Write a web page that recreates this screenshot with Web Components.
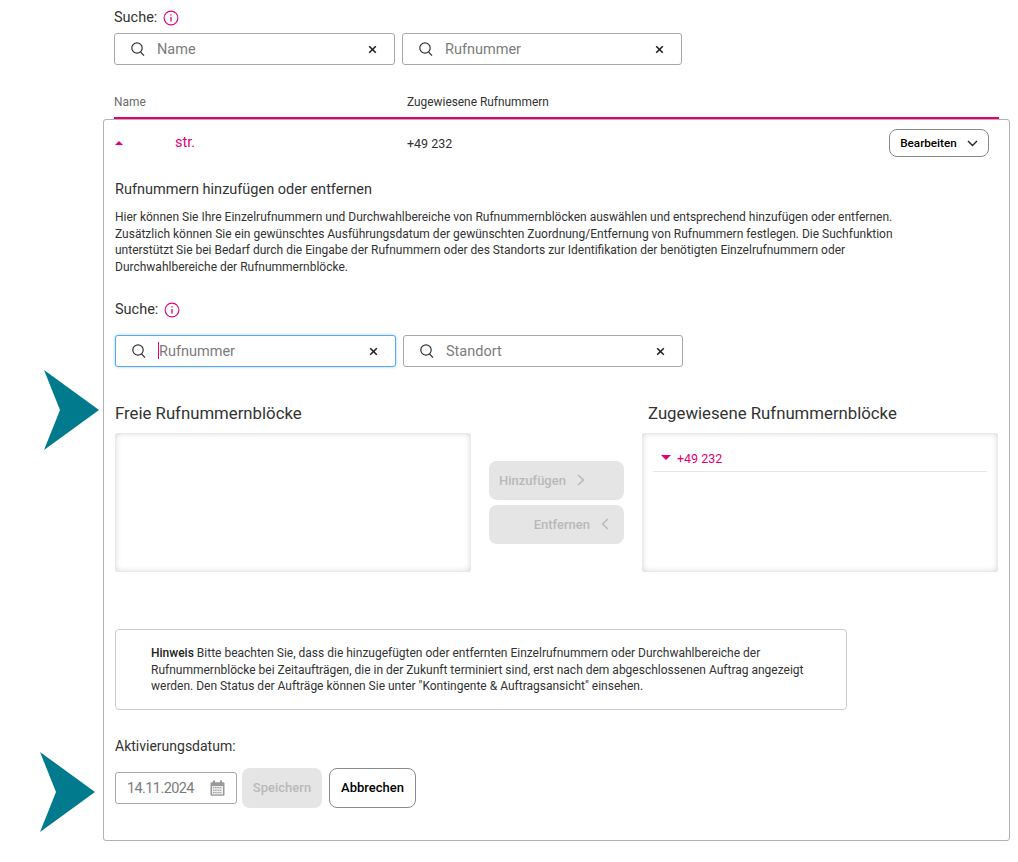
<!DOCTYPE html>
<html lang="de">
<head>
<meta charset="utf-8">
<title>Rufnummern</title>
<style>
  html, body { margin: 0; background: #fff; }
  body { font-family: Roboto, "Liberation Sans", sans-serif; color: #262626; position: relative; height: 862px; overflow: hidden; }
</style>
</head>
<body>
<number-page></number-page>
<script>
const SEARCH_ICON = `<svg width="16" height="16" viewBox="0 0 16 16" fill="none" stroke="#333" stroke-width="1.2"><circle cx="7" cy="7" r="5.2"/><path d="M10.6 11l3.4 3.6"/></svg>`;

class InfoLabel extends HTMLElement {
  connectedCallback() {
    this.attachShadow({ mode: "open" }).innerHTML = `
      <style>
        :host { display: flex; align-items: center; gap: 6px; font-size: 14.5px; line-height: 18px; color: #333; }
        svg { display: block; }
      </style>
      <slot></slot>
      <svg width="16" height="16" viewBox="0 0 16 16" fill="none" stroke="#e20074" stroke-width="1.1">
        <circle cx="8" cy="8" r="6.9"/>
        <path d="M8 7v4.4" stroke-width="1.3"/><path d="M8 4.2v1.4" stroke-width="1.3"/>
      </svg>`;
  }
}

class SearchField extends HTMLElement {
  connectedCallback() {
    const focused = this.hasAttribute("focused");
    this.attachShadow({ mode: "open" }).innerHTML = `
      <style>
        :host { display: flex; align-items: center; box-sizing: border-box; height: 32px; padding: 0 17px 0 15px; width: 100%;
          border: 1px solid ${focused ? "#5aa9ee" : "#a8a8a8"}; border-radius: 3px; background: #fff;
          ${focused ? "box-shadow: 0 0 3px rgba(70,160,240,.55);" : ""} }
        svg { display: block; flex: none; }
        .text { flex: 1; margin-left: 11px; font-size: 14.5px; color: #7c7c7c; white-space: nowrap; }
        .caret { display: inline-block; width: 1px; height: 17px; background: #e20074; vertical-align: -3px; margin-right: 0; }
      </style>
      ${SEARCH_ICON}
      <span class="text">${focused ? '<span class="caret"></span>' : ""}<slot></slot></span>
      <svg width="9" height="9" viewBox="0 0 9 9" stroke="#222" stroke-width="1.6"><path d="M1.2 1.2l6.6 6.6M7.8 1.2L1.2 7.8"/></svg>`;
  }
}

class ActionButton extends HTMLElement {
  connectedCallback() {
    this.attachShadow({ mode: "open" }).innerHTML = `
      <style>
        :host { display: inline-flex; align-items: center; justify-content: center; box-sizing: border-box; gap: 11px;
          height: 40px; padding-bottom: 1px; border-radius: 8px; font-size: 13px; font-weight: 500; white-space: nowrap; }
        :host([disabled]) { background: #e5e5e5; color: #b9b9b9; }
        :host([outline]) { background: #fff; color: #000; border: 1px solid #8a8a8a; }
      </style>
      <slot></slot>`;
  }
}

class ListBox extends HTMLElement {
  connectedCallback() {
    this.attachShadow({ mode: "open" }).innerHTML = `
      <style>
        :host { display: block; box-sizing: border-box; height: 139px; padding: 11px; border-radius: 3px; background: #fff;
          box-shadow: inset 0 0 6px rgba(0,0,0,.19); }
      </style>
      <slot></slot>`;
  }
}

class NumberEntry extends HTMLElement {
  connectedCallback() {
    this.attachShadow({ mode: "open" }).innerHTML = `
      <style>
        :host { display: flex; align-items: center; gap: 6px; box-sizing: border-box; height: 28px; padding: 2px 0 0 8px; border-bottom: 1px solid #e8e8e8;
          font-size: 12.5px; color: #e20074; }
        i { width: 0; height: 0; border-left: 5px solid transparent; border-right: 5px solid transparent; border-top: 5px solid #e20074; margin-top: -2px; }
      </style>
      <i></i><slot></slot>`;
  }
}

class TealArrow extends HTMLElement {
  connectedCallback() {
    this.attachShadow({ mode: "open" }).innerHTML = `
      <style>
        :host { position: absolute; display: block; width: 56px; height: 80px; }
        svg { display: block; }
      </style>
      <svg width="56" height="80" viewBox="0 0 56 80"><path fill="#007a8c" d="M0 0L55 40L0 80L16 40Z"/></svg>`;
  }
}

class DateField extends HTMLElement {
  connectedCallback() {
    this.attachShadow({ mode: "open" }).innerHTML = `
      <style>
        :host { display: flex; align-items: center; justify-content: space-between; box-sizing: border-box; width: 122px; height: 32px;
          padding: 0 11px; border: 1px solid #a8a8a8; border-radius: 3px; font-size: 14.5px; letter-spacing: -.6px; color: #7c7c7c; }
        svg { display: block; }
      </style>
      <slot></slot>
      <svg width="15" height="16" viewBox="0 0 15 16">
        <path fill="#9a9a9a" d="M1.5 2.2h12a1 1 0 0 1 1 1v11.6a1 1 0 0 1-1 1h-12a1 1 0 0 1-1-1V3.2a1 1 0 0 1 1-1z"/>
        <rect x="3" y=".4" width="2" height="3" fill="#9a9a9a"/><rect x="10" y=".4" width="2" height="3" fill="#9a9a9a"/>
        <rect x="2" y="6" width="11" height="8.4" fill="#eee"/>
        <path stroke="#8c8c8c" stroke-width="1" stroke-dasharray="1.4 .8" d="M3 7.7h9M3 10.2h9M3 12.7h9"/>
      </svg>`;
  }
}

class NumberPage extends HTMLElement {
  connectedCallback() {
    this.attachShadow({ mode: "open" }).innerHTML = `
      <style>
        :host { display: block; }
        .top { padding: 9px 19px 0 114px; }
        .fields { display: grid; grid-template-columns: 281px 280px; gap: 7px; }
        .top .fields { margin-top: 6px; }
        .thead { display: grid; grid-template-columns: 293px 1fr; margin-top: 27px; height: 25px; border-bottom: 2px solid #e20074;
          font-size: 11.9px; line-height: 20px; color: #6b6b6b; }
        .thead span + span { color: #333; }
        .card { box-sizing: border-box; width: 907px; height: 722px; margin-left: 103px; padding: 0 11px; border: 1px solid #b2b2b2; border-radius: 3px; }
        .row { display: grid; grid-template-columns: 60px 232px 1fr auto; align-items: center; height: 46px; padding-right: 9px; font-size: 12.5px; color: #333; }
        .row i { width: 0; height: 0; border-left: 4.5px solid transparent; border-right: 4.5px solid transparent; border-bottom: 4px solid #e20074; }
        .row .name { color: #e20074; font-size: 14.5px; margin-top: -1px; }
        .edit { display: flex; align-items: center; justify-content: center; gap: 10px; box-sizing: border-box; width: 100px; height: 28px; border: 1px solid #8a8a8a; border-radius: 8px; font-size: 11.7px; font-weight: 500; color: #000; }
        h2 { margin: 14px 0 0; font-size: 14.5px; line-height: 20px; font-weight: 400; color: #333; }
        .intro { margin: 9px 0 0; font-size: 12px; line-height: 16.5px; color: #333; }
        .intro-label { margin-top: 26px; }
        .card .fields { margin-top: 16px; }
        .lists { display: grid; grid-template-columns: 356px 1fr 356px; margin-top: 37px; }
        h3 { margin: 0; height: 29px; font-size: 16.75px; line-height: 18px; font-weight: 400; color: #333; }
        .right h3 { margin-left: 6px; }
        .moves { display: flex; flex-direction: column; gap: 5px; padding: 57px 18px 0; }
        .moves action-button { width: 135px; height: 39px; }
        .moves svg, .edit svg { display: block; }
        .move-add { justify-content: flex-start; padding-left: 10px; }
        .move-remove { justify-content: flex-end; padding-right: 15px; }
        .hint { box-sizing: border-box; width: 732px; height: 81px; margin-top: 57px; padding: 15px 20px 0 35px; border: 1px solid #ccc; border-radius: 4px; font-size: 12px; line-height: 16.6px; color: #333; }
        .hint b { font-weight: 500; color: #222; }
        .date-label { margin-top: 27px; font-size: 14px; line-height: 18px; color: #333; }
        .actions { display: flex; align-items: center; gap: 5px; margin-top: 13px; }
        .actions .save { width: 80px; }
        .actions .cancel { width: 87px; margin-left: 2px; }
        .a1 { left: 44px; top: 370px; }
        .a2 { left: 40px; top: 752px; }
      </style>
      <div class="top">
        <info-label>Suche:</info-label>
        <div class="fields">
          <search-field>Name</search-field>
          <search-field>Rufnummer</search-field>
        </div>
        <div class="thead"><span>Name</span><span>Zugewiesene Rufnummern</span></div>
      </div>
      <div class="card">
        <div class="row">
          <i></i>
          <span class="name">str.</span>
          <span>+49 232</span>
          <span class="edit">Bearbeiten
            <svg width="11" height="7" viewBox="0 0 11 7" fill="none" stroke="#222" stroke-width="1.4"><path d="M1 1l4.5 4.5L10 1"/></svg>
          </span>
        </div>
        <h2>Rufnummern hinzufügen oder entfernen</h2>
        <p class="intro">Hier können Sie Ihre Einzelrufnummern und Durchwahlbereiche von Rufnummernblöcken auswählen und entsprechend hinzufügen oder entfernen.<br>Zusätzlich können Sie ein gewünschtes Ausführungsdatum der gewünschten Zuordnung/Entfernung von Rufnummern festlegen. Die Suchfunktion<br>unterstützt Sie bei Bedarf durch die Eingabe der Rufnummern oder des Standorts zur Identifikation der benötigten Einzelrufnummern oder<br>Durchwahlbereiche der Rufnummernblöcke.</p>
        <info-label class="intro-label">Suche:</info-label>
        <div class="fields">
          <search-field focused>Rufnummer</search-field>
          <search-field>Standort</search-field>
        </div>
        <div class="lists">
          <div>
            <h3>Freie Rufnummernblöcke</h3>
            <list-box></list-box>
          </div>
          <div class="moves">
            <action-button disabled class="move-add">Hinzufügen
              <svg width="8" height="12" viewBox="0 0 8 12" fill="none" stroke="#b9b9b9" stroke-width="1.5"><path d="M1 1l5.5 5L1 11"/></svg>
            </action-button>
            <action-button disabled class="move-remove">Entfernen
              <svg width="8" height="12" viewBox="0 0 8 12" fill="none" stroke="#b9b9b9" stroke-width="1.5"><path d="M7 1L1.5 6 7 11"/></svg>
            </action-button>
          </div>
          <div class="right">
            <h3>Zugewiesene Rufnummernblöcke</h3>
            <list-box><number-entry>+49 232</number-entry></list-box>
          </div>
        </div>
        <div class="hint"><b>Hinweis</b> Bitte beachten Sie, dass die hinzugefügten oder entfernten Einzelrufnummern oder Durchwahlbereiche der<br>Rufnummernblöcke bei Zeitaufträgen, die in der Zukunft terminiert sind, erst nach dem abgeschlossenen Auftrag angezeigt<br>werden. Den Status der Aufträge können Sie unter "Kontingente &amp; Auftragsansicht" einsehen.</div>
        <div class="date-label">Aktivierungsdatum:</div>
        <div class="actions">
          <date-field>14.11.2024</date-field>
          <action-button disabled class="save">Speichern</action-button>
          <action-button outline class="cancel">Abbrechen</action-button>
        </div>
      </div>
      <teal-arrow class="a1"></teal-arrow>
      <teal-arrow class="a2"></teal-arrow>`;
  }
}

customElements.define("info-label", InfoLabel);
customElements.define("search-field", SearchField);
customElements.define("action-button", ActionButton);
customElements.define("list-box", ListBox);
customElements.define("number-entry", NumberEntry);
customElements.define("teal-arrow", TealArrow);
customElements.define("date-field", DateField);
customElements.define("number-page", NumberPage);
</script>
</body>
</html>
